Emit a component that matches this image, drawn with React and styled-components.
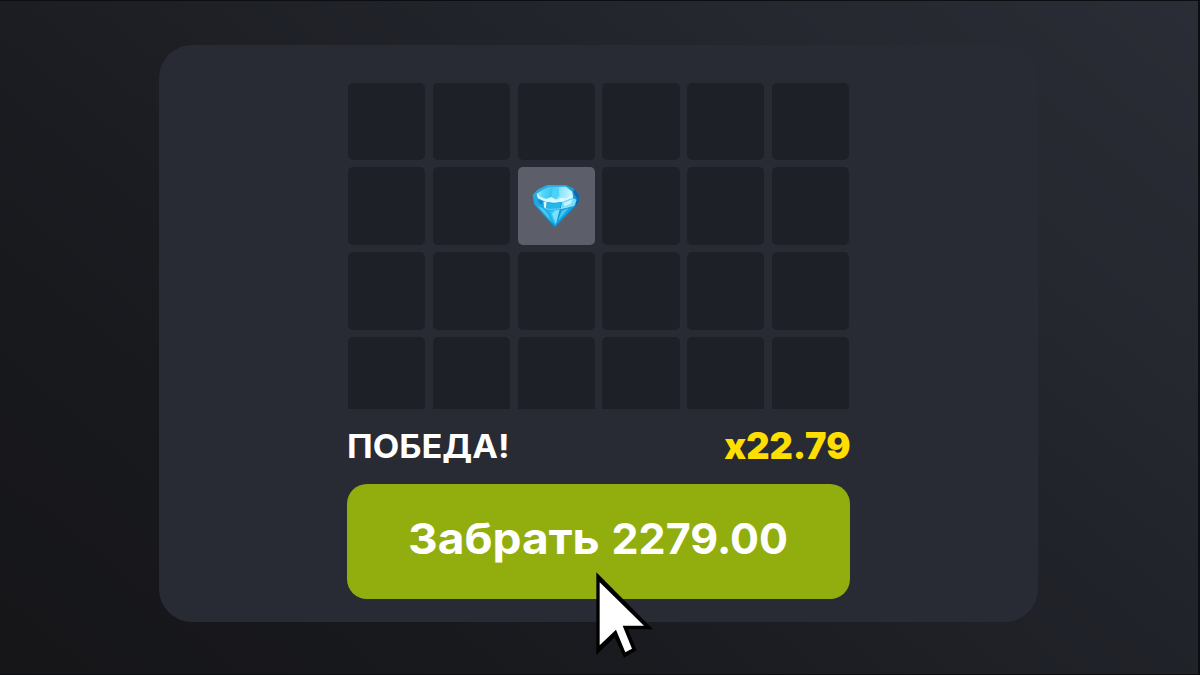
import React from 'react';
import styled, { createGlobalStyle } from 'styled-components';

const COLS = 6;
const ROWS = 4;
const OPENED = 8;

function Diamond() {
  return (
    <Gem viewBox="66 69 144 132">
      <defs>
        <linearGradient id="table" x1="0" y1="0" x2="1" y2="0.1">
          <stop offset="0" stopColor="#c8f6ff" />
          <stop offset="0.2" stopColor="#5ad6f8" />
          <stop offset="0.45" stopColor="#35c6f3" />
          <stop offset="0.7" stopColor="#8fe6fc" />
          <stop offset="1" stopColor="#c8f5ff" />
        </linearGradient>
        <linearGradient id="body" x1="0" y1="0" x2="0.6" y2="1">
          <stop offset="0" stopColor="#2ab4ea" />
          <stop offset="1" stopColor="#0a84c8" />
        </linearGradient>
      </defs>
      <path d="M68 102 84 85 112 72H168L192 83 208 102 205 126 136 199 132 199 72 129Z" fill="url(#body)" />
      <path d="M192 83 208 102 205 126 196 136 200 112 190 94Z" fill="#1268ac" />
      <path d="M80 98 102 85 118 77H168L187 92 189 110 160 121 132 125 106 121 84 111Z" fill="url(#table)" />
      <path d="M128 79 146 78 148 104 138 113 126 104Z" fill="#4fd0f6" />
      <path d="M80 99 92 108 108 114 124 108 138 116 154 110 172 112 187 100 189 110 160 122 132 125 106 122 84 112Z" fill="#d5f8ff" />
      <path d="M70 106 84 113 104 122 100 138 90 136 73 124Z" fill="#1fa9e4" />
      <path d="M84 116 98 121 96 131 86 125Z" fill="#1488cb" />
      <path d="M101 122 110 124 108 142 102 139Z" fill="#dcf8ff" />
      <path d="M112 125 132 128 154 124 150 142 120 146 110 142Z" fill="#23b8ec" />
      <path d="M156 123 188 111 200 116 194 132 166 142 152 143Z" fill="#78ddfa" />
      <path d="M160 126 188 115 182 128 164 136Z" fill="#c5f3ff" />
      <path d="M76 129 100 141 118 147 130 190Z" fill="#25b2e9" />
      <path d="M82 134 100 143 114 162 122 179Z" fill="#4acbf4" />
      <path d="M118 149 150 145 136 195 128 180Z" fill="#2fc6f2" />
      <path d="M126 158 136 148 148 147 138 188Z" fill="#7fdffa" />
      <path d="M154 145 194 134 138 192Z" fill="#16a0df" />
      <path d="M155 149 176 142 144 179Z" fill="#43c8f4" />
      <path d="M101 139 118 146 152 143 194 133" fill="none" stroke="#a5ebfd" strokeWidth="2" />
    </Gem>
  );
}

function Cursor() {
  return (
    <Pointer viewBox="47 36 171 258">
      <path d="M48 37V285L103 232 131 293 169 271 143 208H218Z" fill="#000" />
      <path d="M58 67V256L107 209 135 277 155 266 127 197H191Z" fill="#fff" />
    </Pointer>
  );
}

function App() {
  return (
    <>
      <GlobalStyle />
      <Screen>
        <Panel>
          <Board>
            {Array.from({ length: COLS * ROWS }, (_, i) => (
              <Cell key={i} $open={i === OPENED}>
                {i === OPENED && <Diamond />}
              </Cell>
            ))}
          </Board>
          <Result>
            <Status>ПОБЕДА!</Status>
            <Multiplier>x22.79</Multiplier>
          </Result>
          <Collect>
            <CollectText $stretch={1.07}>Забрать</CollectText>
            <CollectText $stretch={1}>2279.00</CollectText>
          </Collect>
        </Panel>
        <Cursor />
      </Screen>
    </>
  );
}

const GlobalStyle = createGlobalStyle`
  body {
    margin: 0;
    background: #0d0e12;
    font-family: Inter, 'Open Sans', sans-serif;
  }
`;

const Screen = styled.main`
  position: relative;
  box-sizing: border-box;
  width: 1200px;
  height: 675px;
  padding: 44px 0 0 159px;
  overflow: hidden;
  border: solid #0d0e12;
  border-width: 1px 2px 1px 0;
  background: linear-gradient(40deg, #161619 0%, #18191d 25%, #1e2026 50%, #25272f 75%, #2a2d35 100%);
`;

const Panel = styled.section`
  display: flex;
  flex-direction: column;
  box-sizing: border-box;
  width: 879px;
  height: 577px;
  padding: 37.5px 188px 0;
  border-radius: 33px;
  background: #292b34;
`;

const Board = styled.div`
  display: grid;
  flex: none;
  grid-template-columns: repeat(${COLS}, 77.2px);
  grid-auto-rows: 77.3px;
  column-gap: 7.7px;
  row-gap: 7.6px;
  height: 326.8px;
  margin-left: 0.8px;
  overflow: hidden;
`;

const Cell = styled.div`
  display: flex;
  align-items: center;
  justify-content: center;
  border-radius: 5px;
  background: ${(props) => (props.$open ? '#5c5e69' : '#1e2028')};
`;

const Gem = styled.svg`
  width: 48px;
  height: 44px;
  margin-bottom: 1px;
`;

const Result = styled.div`
  display: flex;
  align-items: center;
  justify-content: space-between;
  height: 74.7px;
  white-space: nowrap;
`;

const Status = styled.span`
  color: #fff;
  font-size: 32px;
  font-weight: 700;
  transform: scaleX(1.075);
  transform-origin: left;
`;

const Multiplier = styled.span`
  margin-bottom: 2px;
  color: #ffdf00;
  font-size: 37px;
  font-weight: 900;
  transform: scaleX(0.975);
  transform-origin: right;
`;

const Collect = styled.button`
  display: flex;
  align-items: center;
  justify-content: space-between;
  box-sizing: border-box;
  height: 115.5px;
  padding: 0 62px 7px 61px;
  border: 0;
  border-radius: 20px;
  background: #91ae0e;
  color: #fff;
  font-family: inherit;
`;

const CollectText = styled.span`
  font-size: 43px;
  font-weight: 700;
  transform: scaleX(${(props) => props.$stretch});
  transform-origin: left;
`;

const Pointer = styled.svg`
  position: absolute;
  top: 571px;
  left: 595.6px;
  width: 57px;
  height: 86px;
`;

export default App;
